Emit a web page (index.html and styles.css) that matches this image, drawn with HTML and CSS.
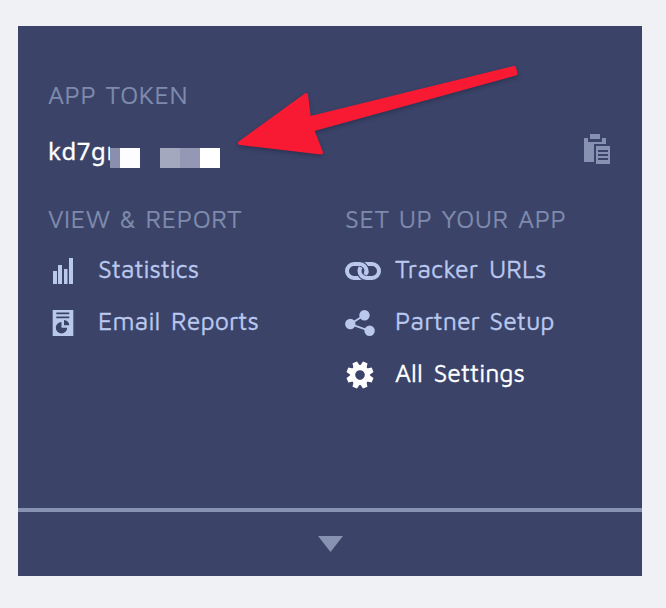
FILE: index.html
```html
<!DOCTYPE html>
<html lang="en">
<head>
<meta charset="utf-8">
<title>App details</title>
<link rel="stylesheet" href="styles.css">
</head>
<body>
<main class="card">
  <section class="token">
    <h2 class="heading">APP TOKEN</h2>
    <div class="token-row">
      <span class="token-value">kd7gr</span>
      <svg class="mask" width="110" height="30" viewBox="0 -10 110 30" shape-rendering="crispEdges">
        <path fill="#3b4368" d="M0-10h110v30H0z"/>
        <path fill="#8a8fad" d="M0 0h10v20H0z"/>
        <path fill="#fdfdff" d="M10 0h20v20H10z"/>
        <path fill="#a4a8bf" d="M50 0h20v20H50z"/>
        <path fill="#9498b4" d="M70 0h20v20H70z"/>
        <path fill="#fff" d="M90 0h20v20H90z"/>
      </svg>
      <svg class="copy" width="26" height="30" viewBox="0 0 26 30" fill="#8792b2">
        <path d="M0 4h4v4h14V4h4v6H10v18H0z"/>
        <path d="M6 0h10v5H6z"/>
        <path fill-rule="evenodd" d="M12 12h14v18H12zM14 16v2h10v-2zM14 20v2h10v-2zM14 24v2h10v-2z"/>
      </svg>
    </div>
  </section>
  <div class="columns">
    <nav class="column">
      <h2 class="heading">VIEW &amp; REPORT</h2>
      <a class="item">
        <svg class="icon" width="36" height="30" viewBox="0 0 36 30"><path d="M5 17h4v13H5zM10 11h4v19h-4zM16 15h3.500v15H16zM21 4h4v26h-4z"/></svg>
        <span class="label label-stats">Statistics</span>
      </a>
      <a class="item">
        <svg class="icon" width="36" height="30" viewBox="0 0 36 30"><path d="M4.700 4H25.300v26H4.700z"/><path class="cut" d="M8.300 6.500h13v1.800h-13zM8.300 10.500h13v1.800h-13zM13.500 16v5.700h5.700a5.700 5.700 0 1 1-5.700-5.700zM16 14a5.500 5.500 0 0 1 5.300 5.300H16z"/></svg>
        <span class="label">Email Reports</span>
      </a>
    </nav>
    <nav class="column">
      <h2 class="heading">SET UP YOUR APP</h2>
      <a class="item">
        <svg class="icon" width="36" height="30" viewBox="0 0 36 30">
          <rect class="link" x="2" y="10" width="19.500" height="14" rx="7"/>
          <path class="gap" d="M14.500 17a7 7 0 0 0 7 7"/>
          <rect class="link" x="14.500" y="10" width="19.500" height="14" rx="7"/>
          <path class="gap" d="M14.500 10a7 7 0 0 1 7 7"/>
          <path class="link" d="M14 10h.5a7 7 0 0 1 7 7v2.500"/>
        </svg>
        <span class="label">Tracker URLs</span>
      </a>
      <a class="item">
        <svg class="icon" width="36" height="30" viewBox="0 0 36 30"><path class="wire" d="M19.500 9 5.500 18l19 6.800"/><circle cx="19.500" cy="9.300" r="5.200"/><circle cx="5.300" cy="18" r="5.200"/><circle cx="24.600" cy="24.800" r="5.200"/></svg>
        <span class="label label-partner">Partner Setup</span>
      </a>
      <a class="item active">
        <svg class="icon" width="36" height="30" viewBox="0 0 36 30"><g transform="translate(15 17) rotate(22.500)">
          <circle r="10"/>
          <path id="teeth" d="M-3.400-9-2.400-13.600H2.400L3.400-9V9L2.400 13.600H-2.400L-3.400 9z"/>
          <use href="#teeth" transform="rotate(45)"/>
          <use href="#teeth" transform="rotate(90)"/>
          <use href="#teeth" transform="rotate(135)"/>
          <circle class="cut" r="4.800"/>
        </g></svg>
        <span class="label">All Settings</span>
      </a>
    </nav>
  </div>
  <footer class="footer"><svg width="25" height="16" viewBox="0 0 25 16" fill="#8792b2"><path d="M0 0h25L12.500 16z"/></svg></footer>
</main>
<svg class="arrow" width="300" height="110" viewBox="230 55 300 110"><path d="M240 143 306 95 309 118.500 514 68 515.500 73.500 312 129.500 321 152.500Z"/></svg>
</body>
</html>
```
FILE: styles.css
```css
* { box-sizing: border-box; }
body {
  margin: 0;
  padding: 26px 24px 32px 18px;
  height: 608px;
  background: #eff1f5;
  font: 25px/30px "Maven Pro", "Open Sans", "Noto Sans", sans-serif;
  overflow: hidden;
}
.card {
  width: 624px;
  height: 550px;
  display: flex;
  flex-direction: column;
  background: #3b4368;
}
.token { padding: 54px 30px 0; }
.heading {
  margin: 0;
  font-size: 25px;
  font-weight: 400;
  letter-spacing: .5px;
  word-spacing: 1.5px;
  color: #7f8bad;
  white-space: nowrap;
  -webkit-text-stroke: .2px currentColor;
}
.token-row {
  display: flex;
  align-items: flex-start;
  position: relative;
  margin-top: 26px;
  height: 30px;
}
.token-value {
  color: #fff;
  font-family: "Noto Sans", "Open Sans", sans-serif;
  font-size: 24px;
  letter-spacing: .6px;
  -webkit-text-stroke: .3px currentColor;
}
.mask { position: absolute; left: 62px; top: 2px; }
.copy { margin-left: auto; margin-right: 2px; margin-top: -2px; }
.columns {
  flex: 1;
  display: grid;
  grid-template-columns: 297px 1fr;
  padding: 38px 0 0 30px;
}
.item {
  display: flex;
  height: 30px;
  margin-top: 22px;
  color: #bac8ee;
}
.heading + .item { margin-top: 20px; }
.item.active { color: #fff; }
.icon { flex: none; margin-right: 14px; fill: currentColor; overflow: visible; }
.label {
  white-space: nowrap;
  word-spacing: 3.5px;
  -webkit-text-stroke: .3px currentColor;
}
.label-stats { letter-spacing: -.1px; }
.label-partner { word-spacing: 2px; }
.icon .cut { fill: #3b4368; }
.link { fill: none; stroke: currentColor; stroke-width: 4; }
.gap { fill: none; stroke: #3b4368; stroke-width: 6; }
.wire { fill: none; stroke: currentColor; stroke-width: 1.8; }
.footer {
  height: 68px;
  border-top: 4px solid #8792b2;
  display: flex;
  justify-content: center;
  padding-top: 24px;
}
.footer svg { display: block; margin-left: 1px; }
.arrow {
  position: absolute;
  left: 230px;
  top: 55px;
  fill: #f71a32;
  stroke: #f71a32;
  stroke-width: 4;
  stroke-linejoin: round;
  filter: drop-shadow(0 2px 2px rgba(20, 25, 50, .4));
}
```
